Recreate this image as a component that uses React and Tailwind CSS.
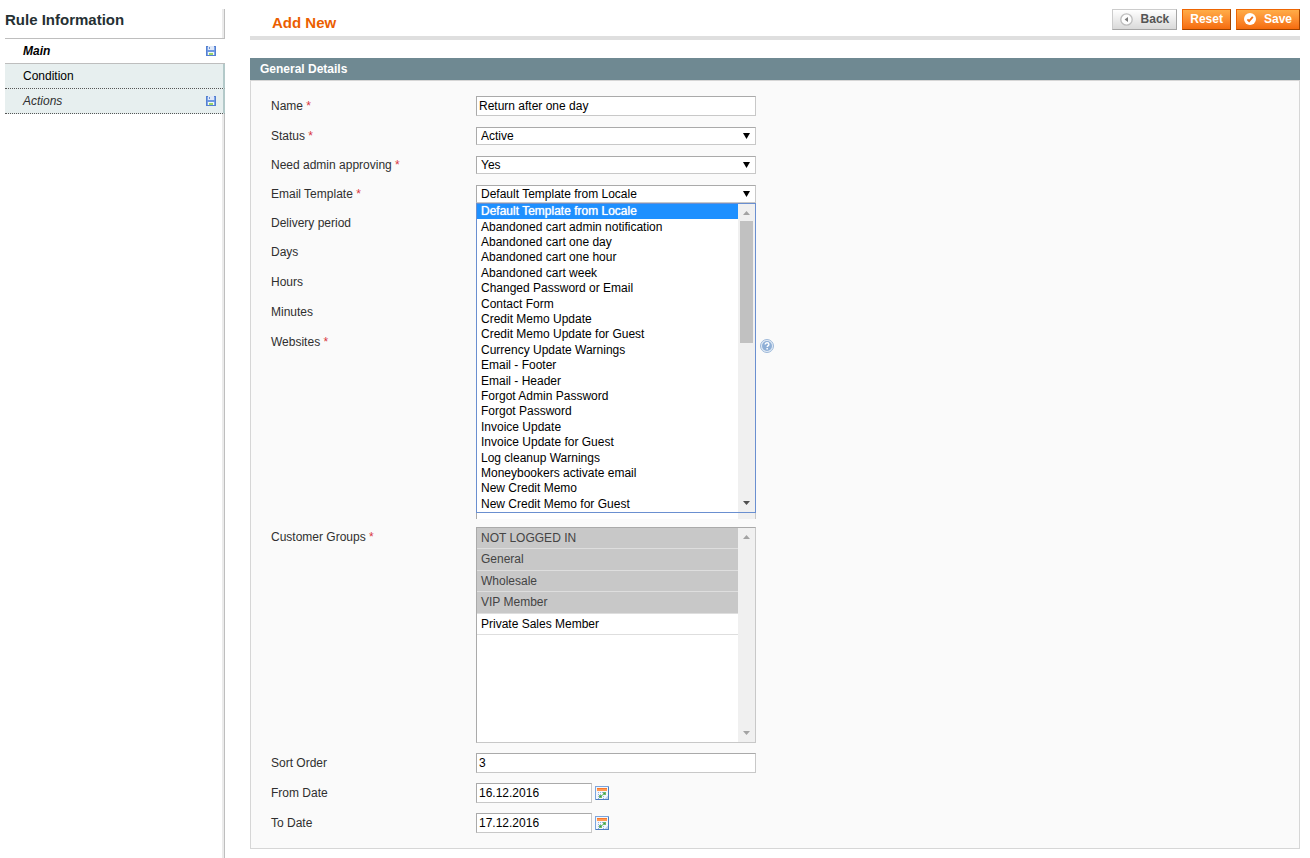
import React from 'react';

const templates = [
  'Default Template from Locale',
  'Abandoned cart admin notification',
  'Abandoned cart one day',
  'Abandoned cart one hour',
  'Abandoned cart week',
  'Changed Password or Email',
  'Contact Form',
  'Credit Memo Update',
  'Credit Memo Update for Guest',
  'Currency Update Warnings',
  'Email - Footer',
  'Email - Header',
  'Forgot Admin Password',
  'Forgot Password',
  'Invoice Update',
  'Invoice Update for Guest',
  'Log cleanup Warnings',
  'Moneybookers activate email',
  'New Credit Memo',
  'New Credit Memo for Guest',
];

const groups = ['NOT LOGGED IN', 'General', 'Wholesale', 'VIP Member', 'Private Sales Member'];

const fieldBorder = 'border border-t-[#aaa] border-l-[#aaa] border-r-[#c8c8c8] border-b-[#c8c8c8]';

function DiskIcon() {
  return (
    <svg width="10" height="10" viewBox="0 0 10 10" shapeRendering="crispEdges" aria-hidden="true">
      <rect width="10" height="10" fill="#5580cf" />
      <rect x="1" y="1" width="8" height="8" fill="#80a6ea" />
      <rect x="2" y="0" width="6" height="4" fill="#dfe8f7" />
      <rect x="3" y="1" width="1" height="2" fill="#6f93d0" />
      <rect x="1" y="4" width="8" height="2" fill="#6c96e2" />
      <rect x="2" y="6" width="6" height="3" fill="#f4f9ef" />
      <rect x="3" y="7" width="4" height="2" fill="#9ad36c" />
    </svg>
  );
}

function BackIcon() {
  return (
    <svg width="13" height="13" viewBox="0 0 13 13" aria-hidden="true">
      <circle cx="6.5" cy="6.5" r="5.7" fill="#fdfdfd" stroke="#bdbdbd" strokeWidth="1.3" />
      <path d="M8 4v5L4.6 6.5z" fill="#7b7b7b" />
    </svg>
  );
}

function CheckIcon() {
  return (
    <svg width="12" height="12" viewBox="0 0 12 12" aria-hidden="true">
      <circle cx="6" cy="6" r="6" fill="#fff" />
      <path d="M3.4 6.4l1.7 1.8L8.8 3.8" fill="none" stroke="#f0731c" strokeWidth="1.8" />
    </svg>
  );
}

function HelpIcon() {
  return (
    <svg width="14" height="14" viewBox="0 0 14 14" aria-hidden="true">
      <circle cx="7" cy="7" r="6.5" fill="#e3ecf6" stroke="#9db8d9" />
      <circle cx="7" cy="7" r="5" fill="#8fafd6" />
      <path
        d="M5.2 5.6c0-1.2.8-1.8 1.9-1.8s1.8.7 1.8 1.6c0 1.2-1.7 1.3-1.7 2.6"
        fill="none"
        stroke="#fff"
        strokeWidth="1.4"
      />
      <rect x="6.4" y="9" width="1.5" height="1.5" fill="#fff" />
    </svg>
  );
}

function CalendarIcon() {
  return (
    <svg width="14" height="14" viewBox="0 0 14 14" shapeRendering="crispEdges" aria-hidden="true">
      <path d="M0 0h14v14H0z" fill="#7ba5dd" />
      <path d="M13 1h1v13H1v-1h12z" fill="#4a7cc0" />
      <rect x="1" y="1" width="12" height="12" fill="#f3f6fc" />
      <rect x="2" y="2" width="10" height="3" fill="#ff9a57" />
      <rect x="2" y="2" width="10" height="1" fill="#f7772a" />
      <path
        d="M3 6h1v1H3zM5 6h1v1H5zM7 6h1v1H7zM3 8h1v1H3zM5 8h1v1H5zM3 10h1v1H3zM8 10h1v1H8zM3 12h1v1H3zM8 12h1v1H8z"
        fill="#8fb0e0"
      />
      <rect x="8" y="6" width="3" height="3" fill="#6dba70" />
      <rect x="9" y="7" width="1" height="1" fill="#3f9a44" />
      <rect x="4" y="9" width="3" height="3" fill="#6dba70" />
      <rect x="5" y="10" width="1" height="1" fill="#3f9a44" />
      <rect x="7" y="8" width="1" height="2" fill="#a8d4aa" />
      <path d="M13 9v4H9z" fill="#c3d4ee" />
    </svg>
  );
}

function Arrow({ up, color }) {
  return (
    <svg width="7" height="4" viewBox="0 0 7 4" aria-hidden="true">
      <path d={up ? 'M0 4h7L3.5 0z' : 'M0 0h7L3.5 4z'} fill={color} />
    </svg>
  );
}

function ScrollBar({ down = '#a3a3a3', thumb }) {
  return (
    <div className="flex w-[17px] shrink-0 flex-col items-center justify-between bg-[#f0f0f0] py-[7px]">
      <Arrow up color="#a3a3a3" />
      {thumb && <div className="mt-[6px] mb-auto h-[122px] w-[13px] bg-[#c1c1c1]" />}
      <Arrow color={down} />
    </div>
  );
}

function Row({ label, htmlFor, required, children }) {
  return (
    <div className="flex items-start">
      <label htmlFor={htmlFor} className="w-[205px] shrink-0 pt-[5px] leading-5 text-[#2f2f2f]">
        {label}
        {required && <span className="text-[#d9363e]"> *</span>}
      </label>
      {children}
    </div>
  );
}

function TextBox({ id, value = '', short }) {
  return (
    <input
      id={id}
      type="text"
      defaultValue={value}
      className={`my-[5px] h-5 bg-white px-[2px] text-black outline-none ${fieldBorder} ${short ? 'w-[116px]' : 'w-[280px]'}`}
    />
  );
}

function DropDown({ id, value, children }) {
  return (
    <div className="relative mt-[6px] mb-[5px] w-[280px]">
      <select
        id={id}
        defaultValue={value}
        className={`block h-[18px] w-full appearance-none bg-white px-1 leading-4 text-black outline-none ${fieldBorder}`}
      >
        <option>{value}</option>
      </select>
      <svg
        className="pointer-events-none absolute top-[6px] right-[6px]"
        width="7"
        height="6"
        viewBox="0 0 7 6"
        aria-hidden="true"
      >
        <path d="M0 0h7L3.5 6z" fill="#000" />
      </svg>
      {children}
    </div>
  );
}

function DateField({ id, label, value }) {
  return (
    <Row label={label} htmlFor={id}>
      <TextBox id={id} value={value} short />
      <button type="button" aria-label={`Select ${label}`} className="mt-2 ml-[3px]">
        <CalendarIcon />
      </button>
    </Row>
  );
}

function ActionButton({ gray, children }) {
  const tone = gray
    ? 'border-t-[#ccc] border-l-[#ccc] border-r-[#a5a5a5] border-b-[#a5a5a5] from-white to-[#d9d9d9] text-[#555]'
    : 'border-t-[#ed6502] border-l-[#ed6502] border-r-[#a04300] border-b-[#a04300] from-[#ffac47] to-[#f56b0a] text-white';
  return (
    <button
      type="button"
      className={`flex h-[21px] items-center gap-2 border bg-linear-to-b px-[7px] pb-px font-bold ${tone}`}
    >
      {children}
    </button>
  );
}

function TabIcon({ edge }) {
  return (
    <span className={edge ? 'mr-[7px]' : 'mr-[9px]'}>
      <DiskIcon />
    </span>
  );
}

function SideEdge() {
  return <div className="w-[3px] shrink-0 border-r border-[#bebebe] bg-[#ebebeb]" />;
}

export default function App() {
  return (
    <div className="flex min-h-screen bg-white font-['Liberation_Sans',Arial,sans-serif] text-[12px] text-[#2f2f2f]">
      <aside className="mt-[9px] flex w-[225px] shrink-0 flex-col pl-[5px]">
        <div className="flex h-[29px] justify-between">
          <h3 className="text-[15px] leading-[21px] font-bold text-[#253033]">Rule Information</h3>
          <SideEdge />
        </div>
        <nav>
          <a
            href="#main"
            className="flex h-[26px] items-center justify-between border-y border-[#bebebe] pl-[18px] font-bold text-black italic"
          >
            Main
            <TabIcon />
          </a>
          <a
            href="#condition"
            className="flex h-[25px] items-center justify-between border-r-2 border-b border-r-[#b3c9c9] border-b-[#555] bg-[#e7efef] pl-[18px] text-black [border-bottom-style:dotted]"
          >
            Condition
          </a>
          <a
            href="#actions"
            className="flex h-[25px] items-center justify-between border-r-2 border-b border-r-[#b3c9c9] border-b-[#555] bg-[#e7efef] pl-[18px] text-[#2f2f2f] italic [border-bottom-style:dotted]"
          >
            Actions
            <TabIcon edge />
          </a>
        </nav>
        <div className="flex flex-1 justify-end">
          <SideEdge />
        </div>
      </aside>

      <main className="min-w-0 flex-1 pt-[9px] pr-[10px] pl-[25px]">
        <header className="flex h-[31px] items-start justify-between border-b-4 border-[#dfdfdf]">
          <h1 className="pl-[22px] text-[15px] leading-7 font-bold text-[#eb5e00]">Add New</h1>
          <div className="flex gap-[5px]">
            <ActionButton gray>
              <BackIcon />
              Back
            </ActionButton>
            <ActionButton>Reset</ActionButton>
            <ActionButton>
              <CheckIcon />
              Save
            </ActionButton>
          </div>
        </header>

        <h2 className="mt-[18px] h-[22px] bg-[#6f8992] px-[10px] leading-[22px] font-bold text-white">
          General Details
        </h2>
        <form className="border border-[#d6d6d6] bg-[#fafafa] px-5 py-[10px]">
          <Row label="Name" htmlFor="name" required>
            <TextBox id="name" value="Return after one day" />
          </Row>
          <Row label="Status" htmlFor="status" required>
            <DropDown id="status" value="Active" />
          </Row>
          <Row label="Need admin approving" htmlFor="approve" required>
            <DropDown id="approve" value="Yes" />
          </Row>
          <Row label="Email Template" htmlFor="template" required>
            <DropDown id="template" value="Default Template from Locale">
              <div className="absolute top-full left-0 z-10 flex h-[310px] w-full border border-[#6a8fd0] bg-white text-black">
                <ul role="listbox" aria-label="Email Template" className="grid flex-1 auto-rows-fr">
                  {templates.map((t, i) => (
                    <li
                      key={t}
                      role="option"
                      aria-selected={i === 0}
                      className={`flex items-center pb-px pl-1 leading-[14px] ${i === 0 ? 'bg-[#1e90ff] text-white [text-shadow:0_0_1px_#fff]' : ''}`}
                    >
                      {t}
                    </li>
                  ))}
                </ul>
                <ScrollBar thumb down="#505050" />
              </div>
            </DropDown>
          </Row>
          <Row label="Delivery period" htmlFor="delivery">
            <DropDown id="delivery" value="" />
          </Row>
          <Row label="Days" htmlFor="days">
            <TextBox id="days" />
          </Row>
          <Row label="Hours" htmlFor="hours">
            <TextBox id="hours" />
          </Row>
          <Row label="Minutes" htmlFor="minutes">
            <TextBox id="minutes" />
          </Row>
          <Row label="Websites" htmlFor="websites" required>
            <div className="mt-[5px] mb-[3px] flex h-[187px] w-[280px] border border-b-0 border-t-[#aaa] border-r-[#c8c8c8] border-l-[#aaa] bg-white">
              <select id="websites" multiple className="min-w-0 flex-1 outline-none [scrollbar-width:none]" />
              <ScrollBar />
            </div>
            <button type="button" aria-label="Help" className="mt-3 ml-1">
              <HelpIcon />
            </button>
          </Row>
          <Row label="Customer Groups" htmlFor="groups" required>
            <div className={`my-[5px] flex h-[216px] w-[280px] bg-white ${fieldBorder}`}>
              <select
                id="groups"
                multiple
                defaultValue={groups.slice(0, 4)}
                className="min-w-0 flex-1 outline-none [scrollbar-width:none]"
              >
                {groups.map((g) => (
                  <option
                    key={g}
                    className="box-border h-[21px] border-b border-[#dedede] px-1 pt-[3px] pb-0 text-black checked:bg-[linear-gradient(#c8c8c8,#c8c8c8)] checked:text-[#444] even:h-[22px]"
                  >
                    {g}
                  </option>
                ))}
              </select>
              <ScrollBar />
            </div>
          </Row>
          <Row label="Sort Order" htmlFor="sort">
            <TextBox id="sort" value="3" />
          </Row>
          <DateField id="from" label="From Date" value="16.12.2016" />
          <DateField id="to" label="To Date" value="17.12.2016" />
        </form>
      </main>
    </div>
  );
}
